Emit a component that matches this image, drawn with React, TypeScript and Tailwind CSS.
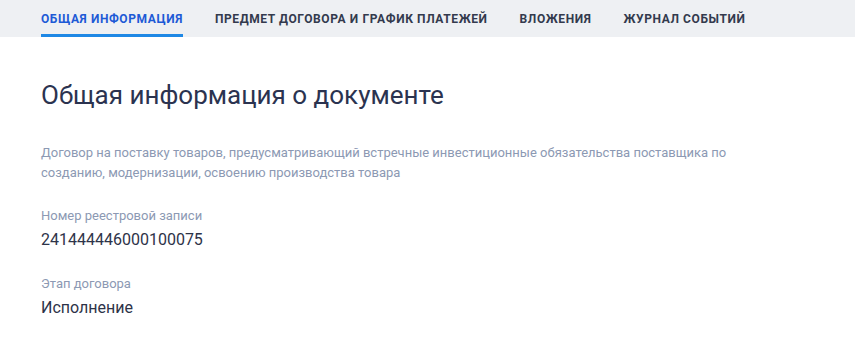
const tabs = [
  "Общая информация",
  "Предмет договора и график платежей",
  "Вложения",
  "Журнал событий",
];

export default function App() {
  return (
    <div className="min-h-screen bg-white font-['Roboto',sans-serif]">
      <nav className="flex h-[37px] gap-8 bg-[#eef0f3] pl-[41px]">
        {tabs.map((t, i) => (
          <div
            key={t}
            className={`flex items-center border-b-[3px] pt-[3px] text-[12px] font-bold uppercase tracking-[0.05em] ${
              i === 0 ? "border-[#1e88e5] text-[#1d5ad6]" : "border-transparent text-[#333a4d]"
            }`}
          >
            {t}
          </div>
        ))}
      </nav>

      <main className="px-[41px] pt-[42px]">
        <h1 className="text-[26px] leading-[32px] text-[#2b3350]">Общая информация о документе</h1>

        <p className="mt-[32px] max-w-[700px] text-[13px] leading-[20px] text-[#8c99b3]">
          Договор на поставку товаров, предусматривающий встречные инвестиционные обязательства поставщика по
          созданию, модернизации, освоению производства товара
        </p>

        <div className="mt-[24px]">
          <div className="text-[13px] leading-[18px] text-[#8c99b3]">Номер реестровой записи</div>
          <div className="mt-[4px] text-[16px] leading-[22px] text-[#2d3348]">241444446000100075</div>
        </div>

        <div className="mt-[24px]">
          <div className="text-[13px] leading-[18px] text-[#8c99b3]">Этап договора</div>
          <div className="mt-[4px] text-[16px] leading-[22px] text-[#2d3348]">Исполнение</div>
        </div>
      </main>
    </div>
  );
}
